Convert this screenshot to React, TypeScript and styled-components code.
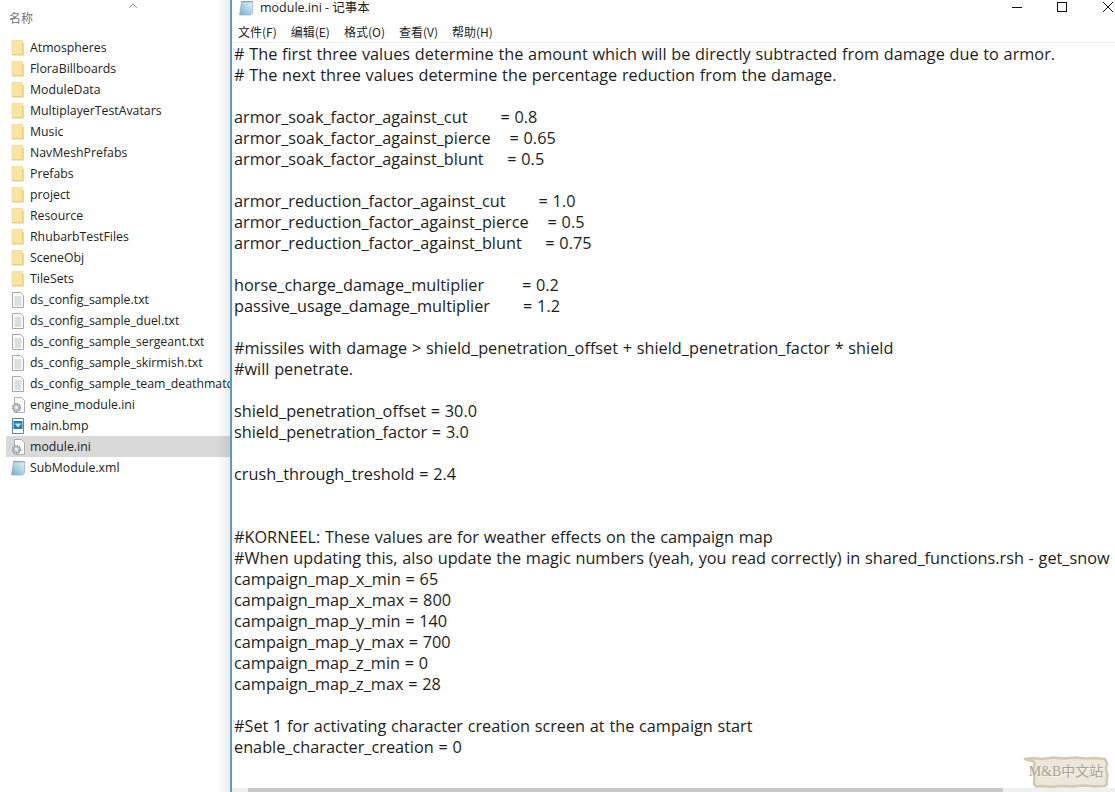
import React from "react";
import styled, { createGlobalStyle } from "styled-components";

const Global = createGlobalStyle`
  html, body { margin: 0; padding: 0; background: #fff; overflow: hidden; }
`;
const Page = styled.div`
  width: 1115px; height: 792px; display: flex; overflow: hidden; position: relative; background: #fff;
  font-family: "Open Sans", "Noto Sans CJK SC", sans-serif;
`;
const Explorer = styled.aside`
  width: 230px; flex: none; display: flex; flex-direction: column; position: relative; background: #fff;
`;
const SortHeader = styled.div`
  height: 37px; flex: none; display: flex; padding: 10px 0 0 9px; box-sizing: border-box; position: relative;
  font-size: 12px; line-height: 16px; color: #6d7680;
  font-family: "Noto Sans CJK SC", sans-serif;
`;
const SortCaret = styled.svg`
  position: absolute; left: 128px; top: 3px;
`;
const FileRow = styled.div<{ $selected?: boolean }>`
  height: 21px; flex: none; margin-left: 6px; display: flex; align-items: center; gap: 5px; padding-left: 6px;
  background: ${(p) => (p.$selected ? "#d9d9d9" : "transparent")};
  font-size: 12.3px; color: #222; white-space: nowrap; overflow: hidden;
`;
const FileName = styled.span`
  min-width: 0; overflow: hidden;
`;
const IconBox = styled.svg`
  flex: none; width: 14px; height: 16px; margin-left: -1px;
`;
const Shadow = styled.div`
  position: absolute; right: 0; top: 0; bottom: 0; width: 14px;
  background: linear-gradient(to right, rgba(0,0,0,0), rgba(0,0,0,0.07));
  pointer-events: none;
`;
const Notepad = styled.section`
  flex: 1; min-width: 0; display: flex; flex-direction: column; border-left: 2px solid #5c9ac4; box-sizing: border-box; position: relative; background: #fff;
`;
const TitleBar = styled.header`
  height: 20px; flex: none; display: flex; align-items: flex-start; padding-left: 8px; gap: 7px; position: relative;
  font-size: 12.5px; line-height: 15px; color: #222;
`;
const WindowButtons = styled.div`
  position: absolute; right: 0; top: 0; height: 14px; display: flex;
`;
const WinBtn = styled.svg`
  display: block; width: 45px; height: 14px;
`;
const MenuBar = styled.nav`
  height: 23px; flex: none; display: flex; align-items: center; padding: 0 0 0 6px; gap: 14px; box-sizing: border-box;
  font-size: 12px; color: #222; border-bottom: 1px solid #f0f0f0;
  font-family: "Noto Sans CJK SC", sans-serif;
`;
const Editor = styled.pre`
  flex: 1; margin: 0; padding: 1px 0 0 2px; overflow: hidden; white-space: pre;
  font-family: "Open Sans", "Noto Sans CJK SC", sans-serif; font-size: 16.27px; word-spacing: 0.5px; line-height: 21px; color: #1c1c1c;
`;
const ScrollTrack = styled.div`
  height: 4px; flex: none; background: #f0f0f0; display: flex; padding-left: 16px;
`;
const ScrollThumb = styled.div`
  width: 755px; height: 4px; background: #c8c8c8;
`;
const Watermark = styled.div`
  position: absolute; right: 5px; bottom: 4px; width: 88px; height: 32px;
  display: flex; align-items: center; justify-content: center;
`;
const WatermarkPaper = styled.svg`
  position: absolute; inset: 0; width: 88px; height: 32px;
`;
const WatermarkText = styled.span`
  position: relative; color: #a5a398; text-shadow: 1px 1px 0 #f6f3ea;
  font: 14px/1 "Liberation Serif", "Noto Sans CJK SC", serif; white-space: nowrap;
`;

const Folder = () => (
  <IconBox viewBox="0 0 14 16">
    <path d="M1 .5h10.500v14H1z" fill="#fbe49f" stroke="#efd792" strokeWidth="0.7" />
    <path d="M11 3h1.800v12.500H1v-1.500h10z" fill="#ecd07c" />
  </IconBox>
);
const TextFile = () => (
  <IconBox viewBox="0 0 14 16">
    <path d="M1.500.5h8l3 3v12h-11z" fill="#fff" stroke="#a3a7ab" />
    <path d="M3.500 5h7M3.500 7h7M3.500 9h7M3.500 11h7M3.500 13h7" stroke="#b8bcc0" />
  </IconBox>
);
const IniFile = () => (
  <IconBox viewBox="0 0 14 16">
    <path d="M3.500.5h7l3 3v12h-10z" fill="#fff" stroke="#a9adb1" />
    <circle cx="5.500" cy="10.500" r="3.800" fill="#c3c6c8" stroke="#8d9195" strokeWidth="1.600" strokeDasharray="1.500 1" />
    <circle cx="5.500" cy="10.500" r="1.400" fill="#f2f2f2" />
  </IconBox>
);
const BmpFile = () => (
  <IconBox viewBox="0 0 14 16">
    <path d="M1.500.5h11v15h-11z" fill="#fff" stroke="#5f83a3" />
    <rect x="2.500" y="3" width="9" height="8" fill="#1c7cc4" />
    <path d="M3.500 5.500l3.500 4 3.500-4z" fill="#dbeaf6" />
  </IconBox>
);
const NoteIcon = () => (
  <IconBox viewBox="0 0 14 16">
    <defs>
      <linearGradient id="noteFill" x1="0" y1="1" x2="1" y2="0">
        <stop offset="0" stopColor="#6fb2cf" />
        <stop offset="1" stopColor="#e6f3f8" />
      </linearGradient>
    </defs>
    <path d="M2.500 2h11v11l-2 2H.5z" fill="url(#noteFill)" stroke="#7fa7b9" strokeWidth="0.6" />
    <path d="M2.500 1.500h11" stroke="#555" strokeDasharray="1 1" />
  </IconBox>
);

type Kind = "folder" | "text" | "ini" | "bmp" | "note";
const icons: Record<Kind, React.FC> = { folder: Folder, text: TextFile, ini: IniFile, bmp: BmpFile, note: NoteIcon };
const files: [string, Kind][] = [
  ["Atmospheres", "folder"], ["FloraBillboards", "folder"], ["ModuleData", "folder"], ["MultiplayerTestAvatars", "folder"],
  ["Music", "folder"], ["NavMeshPrefabs", "folder"], ["Prefabs", "folder"], ["project", "folder"], ["Resource", "folder"],
  ["RhubarbTestFiles", "folder"], ["SceneObj", "folder"], ["TileSets", "folder"],
  ["ds_config_sample.txt", "text"], ["ds_config_sample_duel.txt", "text"], ["ds_config_sample_sergeant.txt", "text"],
  ["ds_config_sample_skirmish.txt", "text"], ["ds_config_sample_team_deathmatch.txt", "text"],
  ["engine_module.ini", "ini"], ["main.bmp", "bmp"], ["module.ini", "ini"], ["SubModule.xml", "note"],
];

const content = `# The first three values determine the amount which will be directly subtracted from damage due to armor.
# The next three values determine the percentage reduction from the damage.

armor_soak_factor_against_cut       = 0.8
armor_soak_factor_against_pierce    = 0.65
armor_soak_factor_against_blunt     = 0.5

armor_reduction_factor_against_cut       = 1.0
armor_reduction_factor_against_pierce    = 0.5
armor_reduction_factor_against_blunt     = 0.75

horse_charge_damage_multiplier        = 0.2
passive_usage_damage_multiplier       = 1.2

#missiles with damage > shield_penetration_offset + shield_penetration_factor * shield
#will penetrate.

shield_penetration_offset = 30.0
shield_penetration_factor = 3.0

crush_through_treshold = 2.4


#KORNEEL: These values are for weather effects on the campaign map
#When updating this, also update the magic numbers (yeah, you read correctly) in shared_functions.rsh - get_snow
campaign_map_x_min = 65
campaign_map_x_max = 800
campaign_map_y_min = 140
campaign_map_y_max = 700
campaign_map_z_min = 0
campaign_map_z_max = 28

#Set 1 for activating character creation screen at the campaign start
enable_character_creation = 0`;

export default function App() {
  return (
    <Page>
      <Global />
      <Explorer>
        <SortHeader>
          名称
          <SortCaret width="10" height="6" viewBox="0 0 10 6">
            <path d="M1 5l4-4 4 4" fill="none" stroke="#9a9a9a" />
          </SortCaret>
        </SortHeader>
        {files.map(([name, kind]) => {
          const Icon = icons[kind];
          return (
            <FileRow key={name} $selected={name === "module.ini"}>
              <Icon />
              <FileName>{name}</FileName>
            </FileRow>
          );
        })}
        <Shadow />
      </Explorer>
      <Notepad>
        <TitleBar>
          <NoteIcon />
          module.ini - 记事本
          <WindowButtons>
            <WinBtn viewBox="0 0 45 14"><path d="M32 7.500h10" stroke="#111" /></WinBtn>
            <WinBtn viewBox="0 0 45 14"><rect x="32.500" y="2.500" width="9" height="9" fill="none" stroke="#111" /></WinBtn>
            <WinBtn viewBox="0 0 45 14"><path d="M33 2l10 10M43 2L33 12" stroke="#111" fill="none" /></WinBtn>
          </WindowButtons>
        </TitleBar>
        <MenuBar>
          <span>文件(F)</span><span>编辑(E)</span><span>格式(O)</span><span>查看(V)</span><span>帮助(H)</span>
        </MenuBar>
        <Editor>{content}</Editor>
        <ScrollTrack><ScrollThumb /></ScrollTrack>
      </Notepad>
      <Watermark>
        <WatermarkPaper viewBox="0 0 88 32">
          <path
            d="M3 3l9-1 8 1 11-1.500 10 1 13-1 9 1 10-.5 10 1 2 4-1 6 1.500 6-1 6 .5 3-2 2-10 .5-12-1-9 1-12-.5-11 1-9-1-6 .5-2-3 .5-6-1-7 1-6-1-3z"
            fill="#ebe7da"
            stroke="#d4c9ae"
            strokeWidth="2.500"
            strokeLinejoin="round"
          />
        </WatermarkPaper>
        <WatermarkText>M&amp;B中文站</WatermarkText>
      </Watermark>
    </Page>
  );
}
